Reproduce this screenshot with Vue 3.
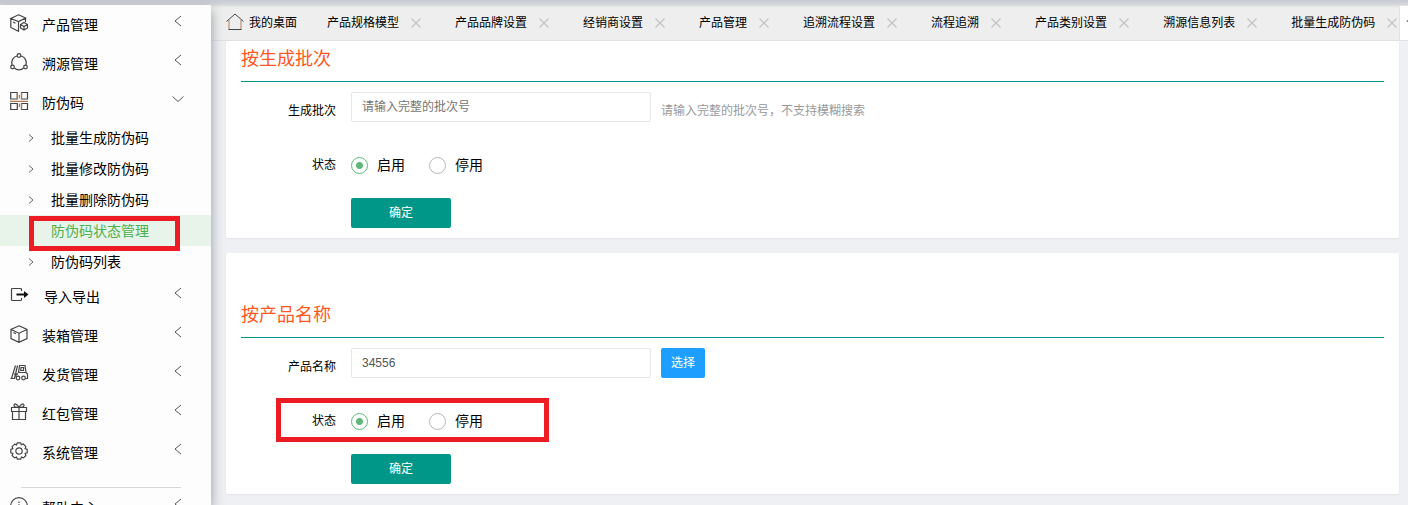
<script setup>
import { ref } from 'vue'

const menu = [
  { icon: 'product', label: '产品管理' },
  { icon: 'trace', label: '溯源管理' },
  {
    icon: 'code',
    label: '防伪码',
    open: true,
    children: ['批量生成防伪码', '批量修改防伪码', '批量删除防伪码', '防伪码状态管理', '防伪码列表'],
  },
  { icon: 'export', label: '导入导出' },
  { icon: 'box', label: '装箱管理' },
  { icon: 'truck', label: '发货管理' },
  { icon: 'gift', label: '红包管理' },
  { icon: 'gear', label: '系统管理' },
  { icon: 'help', label: '帮助中心', divided: true },
]
const current = '防伪码状态管理'

const tabs = ['产品规格模型', '产品品牌设置', '经销商设置', '产品管理', '追溯流程设置', '流程追溯', '产品类别设置', '溯源信息列表', '批量生成防伪码']

const batch = ref('')
const batchStatus = ref('on')
const product = ref('34556')
const productStatus = ref('on')
</script>

<template>
  <div class="shell">
    <div class="topline"></div>
    <div class="body">
      <nav class="side">
        <div v-for="item in menu" :key="item.label" class="group">
          <hr v-if="item.divided" class="divider" />
          <a href="#" class="item">
            <svg class="icon" viewBox="0 0 18 18" aria-hidden="true">
              <g v-if="item.icon === 'product'">
                <path d="M8.500 0.800 L15.500 4 L8.500 7.500 L0.800 4.500 Z M0.800 4.500 V13.500 L8.500 17.300 V7.500 M15.500 4 V8 M3 8 L5.500 9.200" />
                <path d="M14 8.500 L17.500 10.500 V14 L14 16 L10.500 14 V10.500 Z M10.500 10.500 L14 12.500 L17.500 10.500 M14 12.500 V16" />
              </g>
              <g v-else-if="item.icon === 'trace'">
                <circle cx="9" cy="2.500" r="1.800" />
                <circle cx="2.500" cy="14" r="1.800" />
                <circle cx="15.500" cy="14" r="1.800" />
                <path d="M7 3 C3 4 0.800 8 2 12 M11 3 C15 4 17.200 8 16 12 M4.300 15 C7 17.600 11 17.600 13.700 15" />
              </g>
              <g v-else-if="item.icon === 'code'">
                <path d="M0.700 0.500 H7.300 V7 H0.700 Z M11.500 0.500 H17.500 V7 H11.500 Z M0.700 11.500 H7.300 V17.500 H0.700 Z M11.500 11.500 H17.500 V17.500 H11.500 Z" />
                <path class="warm" d="M0 9.300 H18 M7.300 0.500 V7 M11.500 0.500 V7 M9.400 3 V6.500 M9.400 11.500 V15 M11.500 11.500 V17.500" />
              </g>
              <g v-else-if="item.icon === 'export'">
                <path d="M11.500 5 V3.500 Q11.500 2.500 10.500 2.500 H2.500 Q1.500 2.500 1.500 3.500 V13.500 Q1.500 14.500 2.500 14.500 H10.500 Q11.500 14.500 11.500 13.500 V12" />
                <path class="bold" d="M6.500 8.500 H16" />
                <path class="solid" d="M14 5 L18.500 8.500 L14 12 Z" />
              </g>
              <g v-else-if="item.icon === 'box'">
                <path d="M9 0.800 L17 4.500 V13.500 L9 17.300 L1 13.500 V4.500 Z M1 4.500 L9 8.200 L17 4.500 M9 8.200 V17.300 M3.500 7.500 L6 8.700" />
              </g>
              <g v-else-if="item.icon === 'truck'">
                <path d="M5.500 1.500 L1.500 14.500 M7.500 1.500 L4.500 14.500 M0.500 14.500 H5 M4 10 H8" />
                <path d="M8.500 9 L9.500 1.500 H15 L16 8.500 L17.500 10 V14.500 H15.500 M8 8.500 H16 M11 3.500 H13.500 V6.500 H10.700 Z M6 13 V10 H8" />
                <circle cx="8" cy="14" r="1.800" />
                <circle cx="13.500" cy="14" r="1.800" />
              </g>
              <g v-else-if="item.icon === 'gift'">
                <path d="M1.500 4.500 H16.500 V8.500 H1.500 Z M2.500 8.500 V16.500 H15.500 V8.500 M9 4.500 V16.500" />
                <path d="M9 4.500 C7 0.500 4 0 4 2.500 Q4 4.500 9 4.500 C11 0.500 14 0 14 2.500 Q14 4.500 9 4.500" />
              </g>
              <g v-else-if="item.icon === 'gear'">
                <circle cx="9" cy="9" r="3.200" />
                <path d="M7.300 0.800 H10.700 L11.300 2.800 L13.300 2 L15.900 4.600 L15.100 6.600 L17.200 7.400 V10.700 L15.100 11.400 L15.900 13.500 L13.500 15.900 L11.400 15.100 L10.700 17.200 H7.300 L6.600 15.100 L4.600 15.900 L2.100 13.500 L2.900 11.400 L0.800 10.700 V7.400 L2.900 6.600 L2.100 4.600 L4.600 2.100 L6.600 2.900 Z" />
              </g>
              <g v-else>
                <circle cx="9" cy="9" r="8.300" />
                <path d="M9 4.500 V6 M8 8 H9.300 V13 M7.500 13 H11" />
              </g>
            </svg>
            <span class="name" :class="{ wide: item.icon === 'export' }">{{ item.label }}</span>
            <svg class="arrow" viewBox="0 0 12 12" aria-hidden="true">
              <path :d="item.open ? 'M0.500 3.500 L6 8.500 L11.500 3.500' : 'M9 1 L3 6 L9 11'" />
            </svg>
          </a>
          <ul v-if="item.children" class="sub">
            <li v-for="child in item.children" :key="child">
              <a href="#" class="subitem" :class="{ active: child === current }">
                <svg class="caret" viewBox="0 0 6 8" aria-hidden="true"><path d="M1 0.500 L5 4 L1 7.500" /></svg>
                <span>{{ child }}</span>
              </a>
              <span v-if="child === current" class="mark mark-menu"></span>
            </li>
          </ul>
        </div>
      </nav>

      <div class="content">
        <div class="tabs">
          <a href="#" class="tab home">
            <svg class="house" viewBox="0 0 18 18" aria-hidden="true"><path d="M0.500 8.500 L9 1 L17.500 8.500" /><path class="warm" d="M3 7 V16.500 M15 7 V16.500" /><path d="M2.500 16.500 H15.500" /></svg>
            <span>我的桌面</span>
          </a>
          <div v-for="tab in tabs" :key="tab" class="tab">
            <a href="#">{{ tab }}</a>
            <button type="button" class="close" :aria-label="'关闭' + tab">
              <svg viewBox="0 0 10 10" aria-hidden="true"><path d="M0.500 0.500 L9.500 9.500 M9.500 0.500 L0.500 9.500" /></svg>
            </button>
          </div>
          <button type="button" class="more" aria-label="更多">
            <svg viewBox="0 0 10 6" aria-hidden="true"><path d="M0 0.500 L5 5 L10 0.500 Z" /></svg>
          </button>
        </div>

        <main class="main">
          <section class="card flush">
            <h2>按生成批次</h2>
            <form @submit.prevent>
              <div class="row">
                <label class="label low" for="batch">生成批次</label>
                <input id="batch" v-model="batch" class="text" type="text" placeholder="请输入完整的批次号" />
                <span class="hint">请输入完整的批次号，不支持模糊搜索</span>
              </div>
              <div class="row status" role="radiogroup" aria-labelledby="batch-status">
                <span id="batch-status" class="label">状态</span>
                <label class="radio"><input v-model="batchStatus" type="radio" name="batch-status" value="on" />启用</label>
                <label class="radio"><input v-model="batchStatus" type="radio" name="batch-status" value="off" />停用</label>
              </div>
              <div class="row">
                <span class="label"></span>
                <button type="submit" class="confirm">确定</button>
              </div>
            </form>
          </section>

          <section class="card">
            <h2>按产品名称</h2>
            <form @submit.prevent>
              <div class="row">
                <label class="label low" for="product">产品名称</label>
                <input id="product" v-model="product" class="text" type="text" />
                <button type="button" class="pick">选择</button>
              </div>
              <div class="row status" role="radiogroup" aria-labelledby="product-status">
                <span id="product-status" class="label">状态</span>
                <label class="radio"><input v-model="productStatus" type="radio" name="product-status" value="on" />启用</label>
                <label class="radio"><input v-model="productStatus" type="radio" name="product-status" value="off" />停用</label>
                <span class="mark mark-status"></span>
              </div>
              <div class="row">
                <span class="label"></span>
                <button type="submit" class="confirm">确定</button>
              </div>
            </form>
          </section>
        </main>
      </div>
    </div>
  </div>
</template>

<style>
body {
  margin: 0;
  overflow: hidden;
}
</style>

<style scoped>
.shell {
  display: flex;
  flex-direction: column;
  height: 100vh;
  overflow: hidden;
  background: #eff0f4;
  color: #000;
  font: 12px/18px "Liberation Sans", "Noto Sans CJK SC", sans-serif;
}
.shell * {
  box-sizing: border-box;
}
a {
  color: inherit;
  text-decoration: none;
}
button,
input {
  font: inherit;
  margin: 0;
}
svg {
  display: block;
  flex: none;
  fill: none;
  stroke: #444;
}
.topline {
  flex: none;
  height: 5px;
  background: linear-gradient(#c8cad4, #d6d8dc);
}
.body {
  display: flex;
  flex: 1;
  min-height: 0;
}

.side {
  position: relative;
  z-index: 1;
  flex: none;
  width: 211px;
  background: #fdfdfd;
  box-shadow: 0 5px 12px rgba(30, 50, 60, 0.45);
  font-size: 14px;
}
.divider {
  height: 1px;
  margin: 15px 30px 0 21px;
  border: 0;
  background: #d8d8d8;
}
.item {
  display: flex;
  align-items: center;
  height: 39px;
  padding: 0 27px 0 10px;
}
.icon {
  width: 18px;
  height: 18px;
  margin-bottom: 4px;
  overflow: visible;
  stroke-width: 1.2;
}
.warm {
  stroke: #b07a50;
}
.bold {
  stroke: #111;
  stroke-width: 2;
}
.solid {
  fill: #111;
  stroke: none;
}
.name {
  flex: 1;
  margin-left: 14px;
}
.name.wide {
  margin-left: 16px;
}
.arrow {
  width: 12px;
  height: 12px;
  margin-bottom: 8px;
  stroke: #555;
}
.sub {
  margin: 0;
  padding: 0;
  list-style: none;
}
.sub li {
  position: relative;
}
.subitem {
  display: flex;
  align-items: center;
  gap: 17px;
  height: 31px;
  padding-left: 28px;
}
.caret {
  width: 6px;
  height: 8px;
  stroke: #666;
}
.subitem.active {
  background: #e8f4ea;
  color: #4caf50;
}
.mark {
  position: absolute;
  border: 5px solid #ed1c24;
  pointer-events: none;
}
.mark-menu {
  z-index: 1;
  top: 1px;
  left: 29px;
  width: 151px;
  height: 35px;
}
.mark-status {
  top: -8px;
  left: 35px;
  width: 273px;
  height: 44px;
}

.content {
  display: flex;
  flex: 1;
  flex-direction: column;
  min-width: 0;
}
.tabs {
  position: relative;
  display: flex;
  flex: none;
  height: 36px;
  padding: 1px 8px 0 0;
  overflow: hidden;
  border-bottom: 1px solid #e2e2e2;
  background: #eee;
  box-shadow: inset 0 3px 3px -2px #d4d6da;
}
.tab {
  display: flex;
  flex: none;
  align-items: center;
  gap: 8px;
  padding: 0 15px;
}
.tab.home {
  gap: 5px;
}
.house {
  width: 18px;
  height: 18px;
  margin-bottom: 3px;
}
.close {
  display: grid;
  place-items: center;
  width: 18px;
  height: 18px;
  padding: 0;
  border: 0;
  background: none;
}
.close svg {
  width: 10px;
  height: 10px;
  stroke: #c2c2c2;
  stroke-width: 1.2;
}
.more {
  position: absolute;
  top: 0;
  right: -22px;
  width: 31px;
  height: 36px;
  padding: 0 0 0 6px;
  border: 1px solid #e2e2e2;
  background: #fff;
}
.more svg {
  width: 10px;
  height: 6px;
  fill: #555;
  stroke: none;
}

.main {
  display: flex;
  flex-direction: column;
  gap: 15px;
  padding: 0 9px 11px 15px;
}
.card {
  padding: 44px 15px 10px;
  border-radius: 2px;
  background: #fff;
  box-shadow: 0 1px 2px rgba(0, 0, 0, 0.06);
}
.card.flush {
  padding-top: 0;
}
h2 {
  margin: 0 0 10px;
  padding-bottom: 4px;
  border-bottom: 1px solid #009688;
  color: #ff5722;
  font-size: 18px;
  font-weight: 400;
  line-height: 36px;
}
.row {
  position: relative;
  display: flex;
  align-items: center;
  height: 30px;
}
.row.status {
  margin: 28px 0 18px;
}
.label {
  flex: none;
  width: 95px;
  margin-right: 15px;
  text-align: right;
}
.label.low,
.hint {
  padding-top: 8px;
}
.text {
  width: 300px;
  height: 30px;
  margin-right: 10px;
  padding: 0 10px;
  border: 1px solid #e6e6e6;
  border-radius: 2px;
  outline: 0;
  background: #fff;
  color: #555;
}
.text::placeholder {
  color: #757575;
}
.hint {
  color: #999;
}
.radio {
  display: flex;
  align-items: center;
  gap: 9px;
  margin-right: 24px;
  font-size: 14px;
}
.radio input {
  width: 17px;
  height: 17px;
  border: 1px solid #b8b8b8;
  border-radius: 50%;
  appearance: none;
}
.radio input:checked {
  border-color: #5fb878;
  background: radial-gradient(circle, #5fb878 3px, transparent 4px);
}
.confirm,
.pick {
  height: 30px;
  padding: 0 10px;
  border: 0;
  border-radius: 2px;
  background: #009688;
  color: #fff;
}
.confirm {
  width: 100px;
}
.pick {
  background: #1e9fff;
}
</style>
